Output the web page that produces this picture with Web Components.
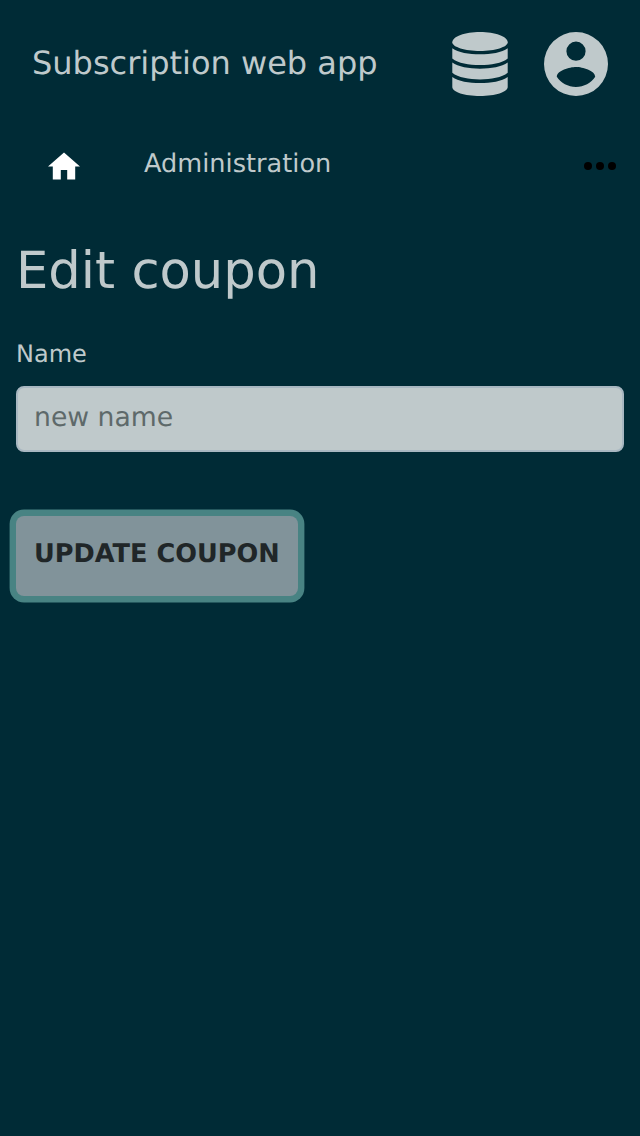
<!DOCTYPE html>
<html lang="en">
<head>
<meta charset="utf-8">
<title>Subscription web app</title>
<style>
html, body { margin: 0; background: #002b36; }
body { min-height: 1136px; color: #bfc9cb; font-family: "DejaVu Sans", sans-serif; text-rendering: geometricPrecision; }
</style>
</head>
<body>
<subscription-app></subscription-app>
<script>
function define(name, html) {
  const template = document.createElement('template');
  template.innerHTML = html;
  customElements.define(name, class extends HTMLElement {
    constructor() {
      super();
      this.attachShadow({ mode: 'open' }).append(template.content.cloneNode(true));
    }
  });
}

define('database-icon', `
<style>:host{display:block;width:56px;height:64px}svg{display:block}</style>
<svg width="56" height="64" viewBox="0 0 56 64" fill="currentColor" aria-hidden="true">
  <path d="M28 0C43 0 55.7 4.6 55.7 10.2C55.7 15 43 18.9 28 18.9S.3 15 .3 10.2C.3 4.6 13 0 28 0Z"/>
  <path d="M.3 16.2C6 20.6 17 22.3 28 22.3S50 20.6 55.7 16.2V26.4C50 31.2 39 33 28 33S6 31.2.3 26.4Z"/>
  <path d="M.3 30.6C6 35 17 36.7 28 36.7S50 35 55.7 30.6V40.8C50 45.6 39 47.4 28 47.4S6 45.6.3 40.8Z"/>
  <path d="M.3 45C6 49.4 17 51.1 28 51.1S50 49.4 55.7 45V55C55.7 60 43.3 64 28 64S.3 60 .3 55Z"/>
</svg>`);

define('account-icon', `
<style>:host{display:block;width:64px;height:64px}svg{display:block}</style>
<svg width="64" height="64" viewBox="0 0 64 64" fill="currentColor" fill-rule="evenodd" aria-hidden="true">
  <path d="M32 0a32 32 0 1 0 0 64a32 32 0 1 0 0-64ZM32 9.6a9.6 9.6 0 1 1 0 19.2a9.6 9.6 0 1 1 0-19.2ZM32 55C24 55 16.9 51 12.8 44.8C12.9 38.4 25.6 35 32 35S51.1 38.4 51.2 44.8C47.1 51 40 55 32 55Z"/>
</svg>`);

define('app-header', `
<style>
:host{display:flex;align-items:center;height:128px;padding:0 32px;box-sizing:border-box}
.title{flex:1;font-size:32px;line-height:38px;margin-bottom:2px}
.actions{display:flex;gap:36px}
</style>
<div class="title"><slot></slot></div>
<div class="actions"><database-icon></database-icon><account-icon></account-icon></div>`);

define('app-nav', `
<style>
:host{display:flex;align-items:center;height:76px;padding:0 24px 0 48px}
.home{width:32px;height:28px;margin-right:64px}
.label{flex:1;font-size:25.6px;line-height:38px;margin-top:-4px}
svg{display:block}
</style>
<svg class="home" viewBox="0 0 32 28" fill="#fff" aria-label="Home"><path d="M16 .4L32 14.6H27.2V27.6H19.2V18H12.8V27.6H4.8V14.6H0Z"/></svg>
<span class="label"><slot></slot></span>
<svg width="32" height="8" viewBox="0 0 32 8" aria-label="More"><circle cx="4" cy="4" r="4"/><circle cx="16" cy="4" r="4"/><circle cx="28" cy="4" r="4"/></svg>`);

define('text-field', `
<style>
:host{display:block}
label{display:block;font-size:24px;line-height:36px;margin-bottom:14px}
input{display:block;width:100%;height:66px;box-sizing:border-box;margin:0;padding:0 16px 4px;border:2px solid #a8b7c1;border-radius:8px;background:#bfc9cb;font:26.6667px "DejaVu Sans",sans-serif;color:#222;text-rendering:inherit}
input::placeholder{color:#5e696a;opacity:1}
</style>
<label for="field"><slot></slot></label>
<input id="field" placeholder="new name">`);

define('primary-button', `
<style>
:host{display:block}
button{display:block;width:282px;height:80px;box-sizing:border-box;margin:0;padding:0 0 5px 18px;text-align:left;border:0;border-radius:8px;background:#81939a;box-shadow:0 0 0 6.4px #488383;color:#202628;font:bold 25.6px "DejaVu Sans",sans-serif;white-space:nowrap;text-rendering:inherit}
</style>
<button type="button"><slot></slot></button>`);

define('coupon-form', `
<style>
:host{display:block;padding:37px 16px 36px}
h1{margin:0 0 34px;font-size:51.2px;line-height:61px;font-weight:400}
primary-button{margin-top:64px}
</style>
<h1>Edit coupon</h1>
<text-field>Name</text-field>
<primary-button>UPDATE COUPON</primary-button>`);

define('subscription-app', `
<style>:host{display:block}</style>
<app-header>Subscription web app</app-header>
<app-nav>Administration</app-nav>
<coupon-form></coupon-form>`);
</script>
</body>
</html>
